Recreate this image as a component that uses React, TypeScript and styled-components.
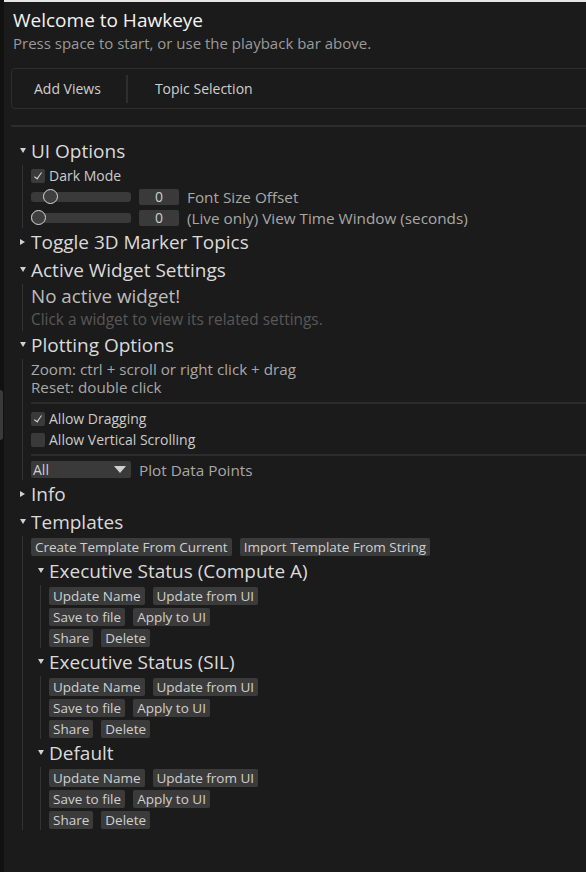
import React from 'react';
import styled, { createGlobalStyle } from 'styled-components';

const GlobalStyle = createGlobalStyle`
  html, body {
    margin: 0;
    padding: 0;
    background: #111111;
  }
  body {
    font-family: 'Open Sans', 'Noto Sans', sans-serif;
    color: #d8d8d8;
  }
`;

type TemplateProps = { name: string };

function Template({ name }: TemplateProps) {
    return (
        <>
            <SubHeader>
                <Arrow open />
                <SubTitle>{name}</SubTitle>
            </SubHeader>
            <SubChildren>
                <ButtonRow>
                    <Button>Update Name</Button>
                    <Button>Update from UI</Button>
                </ButtonRow>
                <ButtonRow>
                    <Button>Save to file</Button>
                    <Button>Apply to UI</Button>
                </ButtonRow>
                <ButtonRow>
                    <Button>Share</Button>
                    <Button>Delete</Button>
                </ButtonRow>
            </SubChildren>
        </>
    );
}

function Slider({ thumb }: { thumb: number }) {
    return (
        <Track>
            <Thumb style={{ left: thumb }} />
        </Track>
    );
}

function App() {
    return (
        <Page>
            <GlobalStyle />
            <Rail>
                <RailThumb />
            </Rail>
            <Panel>
                <Title>Welcome to Hawkeye</Title>
                <Subtitle>Press space to start, or use the playback bar above.</Subtitle>

                <Tabs>
                    <Tab>Add Views</Tab>
                    <TabDivider />
                    <Tab>Topic Selection</Tab>
                </Tabs>
                <Rule />

                <Tree>
                    <Header>
                        <Arrow open />
                        <HeaderText>UI Options</HeaderText>
                    </Header>
                    <Children>
                        <Row>
                            <Check checked />
                            <Label>Dark Mode</Label>
                        </Row>
                        <Row>
                            <Slider thumb={12} />
                            <NumberBox>0</NumberBox>
                            <SoftLabel>Font Size Offset</SoftLabel>
                        </Row>
                        <Row>
                            <Slider thumb={0} />
                            <NumberBox>0</NumberBox>
                            <SoftLabel>(Live only) View Time Window (seconds)</SoftLabel>
                        </Row>
                    </Children>

                    <Header>
                        <Arrow />
                        <HeaderText>Toggle 3D Marker Topics</HeaderText>
                    </Header>

                    <Header>
                        <Arrow open />
                        <HeaderText>Active Widget Settings</HeaderText>
                    </Header>
                    <Children>
                        <BigNote>No active widget!</BigNote>
                        <DimNote>Click a widget to view its related settings.</DimNote>
                    </Children>

                    <Header>
                        <Arrow open />
                        <HeaderText>Plotting Options</HeaderText>
                    </Header>
                    <Children>
                        <Notes>
                            <Note>Zoom: ctrl + scroll or right click + drag</Note>
                            <Note>Reset: double click</Note>
                        </Notes>
                        <InnerRule $top={6} $bottom={4} />
                        <Row>
                            <Check checked />
                            <Label>Allow Dragging</Label>
                        </Row>
                        <Row>
                            <Check />
                            <Label>Allow Vertical Scrolling</Label>
                        </Row>
                        <InnerRule $top={4} $bottom={3} />
                        <Row>
                            <Select>
                                <span>All</span>
                                <SelectArrow />
                            </Select>
                            <SoftLabel>Plot Data Points</SoftLabel>
                        </Row>
                    </Children>

                    <Header>
                        <Arrow />
                        <HeaderText>Info</HeaderText>
                    </Header>

                    <Header>
                        <Arrow open />
                        <HeaderText>Templates</HeaderText>
                    </Header>
                    <Children>
                        <ButtonRow>
                            <Button>Create Template From Current</Button>
                            <Button>Import Template From String</Button>
                        </ButtonRow>
                        <Template name="Executive Status (Compute A)" />
                        <Template name="Executive Status (SIL)" />
                        <Template name="Default" />
                    </Children>
                </Tree>
            </Panel>
        </Page>
    );
}

export default App;


const Page = styled.div`
  display: flex;
  width: 586px;
  min-height: 872px;
  overflow: hidden;
`

const Rail = styled.div`
  width: 4px;
  flex: none;
  background: #111111;
`

const RailThumb = styled.div`
  margin-top: 390px;
  width: 3px;
  height: 50px;
  border-radius: 0 3px 3px 0;
  background: #3a3a3a;
`

const Panel = styled.div`
  flex: 1;
  min-width: 0;
  background: #1b1b1b;
  border-top: 2px solid #e6e6e6;
`

const Title = styled.div`
  margin: 5px 0 0 9px;
  font-size: 19px;
  line-height: 26px;
  color: #f2f2f2;
`

const Subtitle = styled.div`
  margin-left: 9px;
  font-size: 15px;
  line-height: 21px;
  color: #9a9a9a;
`

const Tabs = styled.div`
  display: flex;
  align-items: center;
  height: 39px;
  margin: 14px -10px 0 7px;
  padding-left: 22px;
  border: 1px solid #2e2e2e;
  border-radius: 4px;
`

const Tab = styled.div`
  font-size: 14px;
  color: #cfcfcf;
`

const TabDivider = styled.div`
  width: 2px;
  height: 28px;
  margin: 0 27px 0 25px;
  background: #2e2e2e;
`

const Rule = styled.div`
  height: 2px;
  margin: 16px -10px 0 7px;
  background: #2c2c2c;
`

const Tree = styled.div`
  margin-top: 10px;
  padding-left: 15px;
`

const Header = styled.div`
  display: flex;
  align-items: center;
  height: 28px;
`

const Arrow = styled.span<{ open?: boolean }>`
  width: 12px;
  flex: none;
  position: relative;
  height: 10px;

  &::before {
    content: '';
    position: absolute;
    left: 1px;
    top: 2px;
    border-style: solid;
    border-color: transparent;
    ${({ open }) =>
        open
            ? 'border-width: 5px 3px 0 3px; border-top-color: #d0d0d0;'
            : 'border-width: 3px 0 3px 5px; border-left-color: #d0d0d0;'}
  }
`

const HeaderText = styled.span`
  font-size: 19px;
  color: #dadada;
  white-space: nowrap;
`

const Children = styled.div`
  margin-left: 3px;
  padding-left: 8px;
  border-left: 1px solid #333333;
`

const Row = styled.div`
  display: flex;
  align-items: center;
  height: 21px;
`

const Check = styled.span<{ checked?: boolean }>`
  width: 14px;
  height: 14px;
  flex: none;
  border-radius: 2px;
  background: #3a3a3a;
  position: relative;

  &::after {
    content: '';
    display: ${({ checked }) => (checked ? 'block' : 'none')};
    position: absolute;
    left: 5px;
    top: 2px;
    width: 3px;
    height: 7px;
    border: solid #d8d8d8;
    border-width: 0 1px 1px 0;
    transform: rotate(35deg);
  }
`

const Label = styled.span`
  margin-left: 4px;
  font-size: 14px;
  color: #cccccc;
  white-space: nowrap;
`

const SoftLabel = styled.span`
  margin-left: 8px;
  font-size: 15.3px;
  color: #a8a8a8;
  white-space: nowrap;
`

const Track = styled.div`
  position: relative;
  width: 100px;
  height: 10px;
  flex: none;
  border-radius: 3px;
  background: #3a3a3a;
`

const Thumb = styled.div`
  position: absolute;
  top: -3px;
  width: 13px;
  height: 13px;
  border-radius: 50%;
  border: 1.5px solid #d6d6d6;
  background: #3f3f3f;
`

const NumberBox = styled.div`
  width: 40px;
  height: 16px;
  margin-left: 8px;
  flex: none;
  border-radius: 2px;
  background: #3a3a3a;
  font-size: 14px;
  line-height: 16px;
  text-align: center;
  color: #cfcfcf;
`

const BigNote = styled.div`
  height: 25px;
  line-height: 25px;
  font-size: 18.8px;
  color: #bdbdbd;
`

const DimNote = styled.div`
  height: 22px;
  line-height: 21px;
  font-size: 15.4px;
  color: #585858;
  white-space: nowrap;
`

const Notes = styled.div`
  padding-top: 1px;
`

const Note = styled.div`
  height: 18px;
  line-height: 18px;
  font-size: 15.2px;
  color: #a8a8a8;
  white-space: nowrap;
`

const InnerRule = styled.div<{ $top: number; $bottom: number }>`
  height: 2px;
  margin: ${({ $top, $bottom }) => `${$top}px -10px ${$bottom}px 0`};
  background: #2c2c2c;
`

const Select = styled.div`
  display: flex;
  align-items: center;
  justify-content: space-between;
  width: 100px;
  height: 17px;
  padding: 0 5px 0 2px;
  box-sizing: border-box;
  border-radius: 2px;
  background: #3a3a3a;
  font-size: 14px;
  color: #cfcfcf;
`

const SelectArrow = styled.span`
  border-style: solid;
  border-color: #d0d0d0 transparent transparent transparent;
  border-width: 7px 6px 0 6px;
`

const ButtonRow = styled.div`
  display: flex;
  align-items: center;
  gap: 8px;
  height: 21px;
`

const Button = styled.div`
  height: 18px;
  padding: 0 4px;
  border-radius: 2px;
  background: #3b3b3b;
  font-size: 13.5px;
  line-height: 18px;
  color: #d0d0d0;
  white-space: nowrap;
`

const SubHeader = styled.div`
  display: flex;
  align-items: center;
  height: 28px;
  padding-left: 6px;
`

const SubTitle = styled.span`
  font-size: 19px;
  color: #dadada;
  white-space: nowrap;
`

const SubChildren = styled.div`
  margin-left: 9px;
  padding-left: 8px;
  border-left: 1px solid #333333;
`
